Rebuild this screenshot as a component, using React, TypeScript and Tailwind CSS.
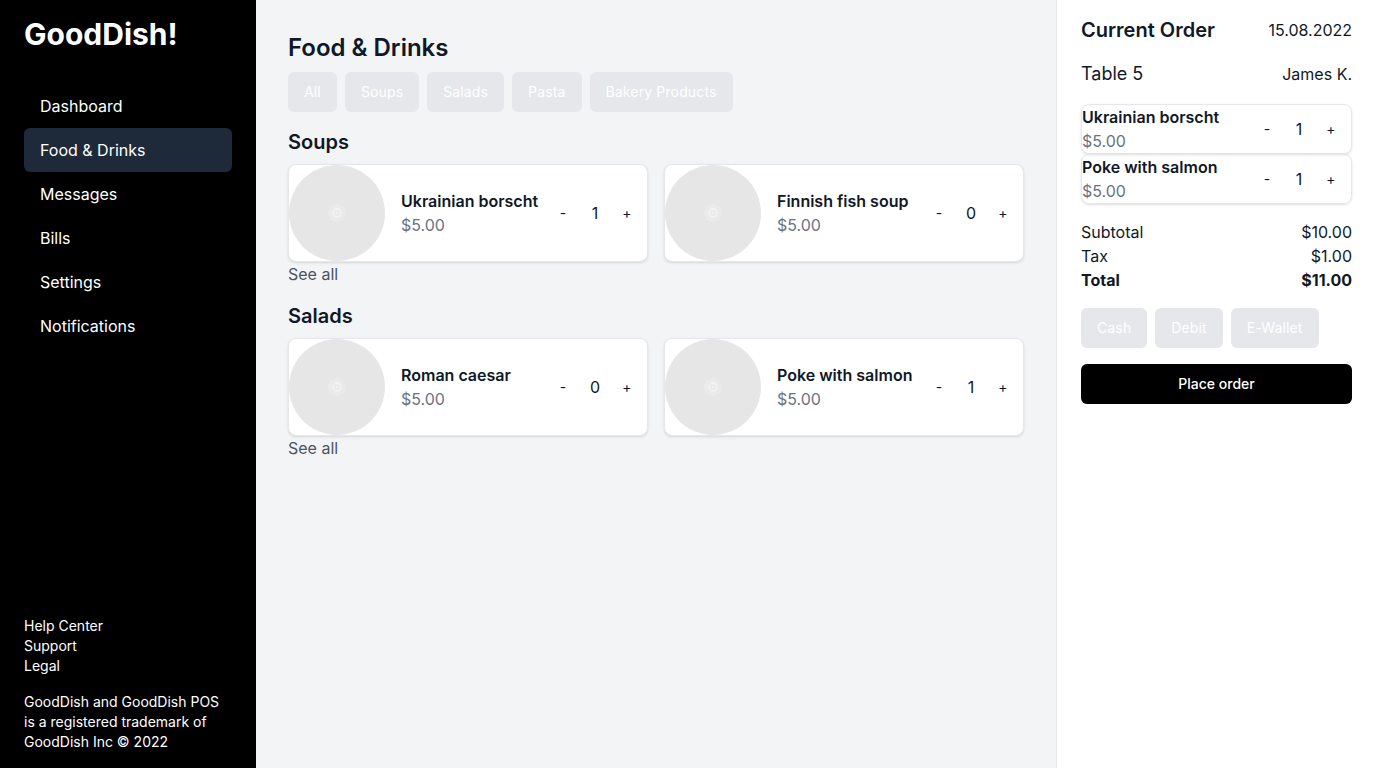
import { useState } from "react";

type Dish = {
  name: string;
  price: number;
};

const categories = ["All", "Soups", "Salads", "Pasta", "Bakery Products"];

const sections: { title: string; dishes: Dish[] }[] = [
  {
    title: "Soups",
    dishes: [
      { name: "Ukrainian borscht", price: 5 },
      { name: "Finnish fish soup", price: 5 },
    ],
  },
  {
    title: "Salads",
    dishes: [
      { name: "Roman caesar", price: 5 },
      { name: "Poke with salmon", price: 5 },
    ],
  },
];

const navItems = ["Dashboard", "Food & Drinks", "Messages", "Bills", "Settings", "Notifications"];

// Helper to format price
const formatPrice = (price: number) => `$${price.toFixed(2)}`;

const Placeholder = () => (
  <div className="w-24 h-24 shrink-0 rounded-full bg-[#e6e6e6] flex items-center justify-center">
    <svg width="20" height="20" viewBox="0 0 20 20">
      <circle cx="10" cy="10" r="9" fill="#eaeaea" />
      <circle cx="10" cy="10" r="4" fill="none" stroke="#f3f3f3" strokeWidth="1.5" />
      <circle cx="10" cy="10" r="1.2" fill="#f0f0f0" />
    </svg>
  </div>
);

const Counter = ({ value, onChange }: { value: number; onChange: (v: number) => void }) => (
  <div className="flex items-center text-gray-900">
    <button className="w-8 h-8 text-sm" onClick={() => onChange(Math.max(0, value - 1))}>
      -
    </button>
    <span className="w-8 text-center text-base">{value}</span>
    <button className="w-8 h-8 text-sm" onClick={() => onChange(value + 1)}>
      +
    </button>
  </div>
);

const App = () => {
  const [counts, setCounts] = useState<Record<string, number>>({
    "Ukrainian borscht": 1,
    "Finnish fish soup": 0,
    "Roman caesar": 0,
    "Poke with salmon": 1,
  });

  const setCount = (name: string, v: number) => setCounts((c) => ({ ...c, [name]: v }));

  const orderItems = Object.entries(counts).filter(([, n]) => n > 0);

  return (
    <div className="flex h-[768px] w-full font-[Inter,sans-serif] text-gray-900">
      {/* Sidebar */}
      <aside className="w-64 shrink-0 bg-black text-white flex flex-col px-6 pt-4 pb-4">
        <h1 className="text-3xl font-bold leading-9">GoodDish!</h1>
        <nav className="mt-8 flex flex-col">
          {navItems.map((item) => (
            <a
              key={item}
              className={`px-4 py-2.5 rounded-md text-base ${item === "Food & Drinks" ? "bg-gray-800" : ""}`}
            >
              {item}
            </a>
          ))}
        </nav>
        <div className="mt-auto text-sm leading-5">
          <div>Help Center</div>
          <div>Support</div>
          <div>Legal</div>
          <p className="mt-4">
            GoodDish and GoodDish POS
            <br />
            is a registered trademark of
            <br />
            GoodDish Inc © 2022
          </p>
        </div>
      </aside>

      {/* Main */}
      <main className="flex-1 bg-gray-100 px-8 pt-8">
        <h2 className="text-2xl font-semibold leading-8">Food & Drinks</h2>
        <div className="mt-2 flex gap-2">
          {categories.map((c) => (
            <button key={c} className="h-10 px-4 rounded-md bg-gray-200 text-white text-sm tracking-[0.01em]">
              {c}
            </button>
          ))}
        </div>
        <div className="mt-4 flex flex-col gap-4">
          {sections.map((section) => (
            <section key={section.title}>
              <h3 className="text-xl font-semibold leading-7">{section.title}</h3>
              <div className="mt-2 grid grid-cols-2 gap-4">
                {section.dishes.map((dish) => (
                  <div
                    key={dish.name}
                    className="flex items-center bg-white border border-gray-200 rounded-lg shadow-sm overflow-hidden pr-1"
                  >
                    <Placeholder />
                    <div className="ml-4 flex-1">
                      <div className="font-semibold">{dish.name}</div>
                      <div className="text-gray-500">{formatPrice(dish.price)}</div>
                    </div>
                    <Counter value={counts[dish.name]} onChange={(v) => setCount(dish.name, v)} />
                  </div>
                ))}
              </div>
              <a className="block text-gray-600">See all</a>
            </section>
          ))}
        </div>
      </main>

      {/* Current order */}
      <aside className="w-80 shrink-0 bg-white border-l border-gray-200 px-6 pt-4">
        <div className="flex items-center justify-between">
          <h2 className="text-xl font-semibold leading-7">Current Order</h2>
          <span>15.08.2022</span>
        </div>
        <div className="mt-4 flex items-center justify-between">
          <span className="text-lg leading-7">Table 5</span>
          <span>James K.</span>
        </div>
        <div className="mt-4 flex flex-col">
          {orderItems.map(([name, n]) => (
            <div
              key={name}
              className="flex items-center border border-gray-200 rounded-lg shadow-sm pr-1"
            >
              <div className="flex-1">
                <div className="font-semibold">{name}</div>
                <div className="text-gray-500">{formatPrice(5)}</div>
              </div>
              <Counter value={n} onChange={(v) => setCount(name, v)} />
            </div>
          ))}
        </div>
        <div className="mt-4">
          <div className="flex justify-between">
            <span>Subtotal</span>
            <span>$10.00</span>
          </div>
          <div className="flex justify-between">
            <span>Tax</span>
            <span>$1.00</span>
          </div>
          <div className="flex justify-between font-bold">
            <span>Total</span>
            <span>$11.00</span>
          </div>
        </div>
        <div className="mt-4 flex gap-2">
          {["Cash", "Debit", "E-Wallet"].map((p) => (
            <button key={p} className="h-10 px-4 rounded-md bg-gray-200 text-white text-sm tracking-[0.01em]">
              {p}
            </button>
          ))}
        </div>
        <button className="mt-4 w-full h-10 rounded-md bg-black text-white text-sm font-medium">
          Place order
        </button>
      </aside>
    </div>
  );
};

export default App;
